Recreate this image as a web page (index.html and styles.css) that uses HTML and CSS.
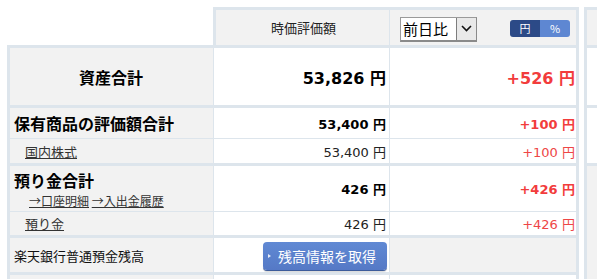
FILE: index.html
```html
<!DOCTYPE html>
<html lang="ja">
<head>
<meta charset="utf-8">
<link rel="stylesheet" href="styles.css">
</head>
<body>
<div class="page">
  <div class="main">
    <div class="head">
      <div class="head-spacer"></div>
      <div class="head-box">
        <div class="hcell hval">時価評価額</div>
        <div class="hcell hchg">
          <div class="select"><span class="select-text">前日比</span><span class="select-arrow"><svg width="11" height="7" viewBox="0 0 11 7"><polyline points="1,1 5.5,5.5 10,1" fill="none" stroke="#111" stroke-width="1.6"/></svg></span></div>
          <div class="toggle"><span class="tg tg-on">円</span><span class="tg tg-off">%</span></div>
        </div>
      </div>
    </div>
    <div class="table">
      <div class="row r-total thick">
        <div class="lab lab-center">資産合計</div>
        <div class="val big">53,826 円</div>
        <div class="chg big red">+526 円</div>
      </div>
      <div class="row r-hold thin">
        <div class="lab lab-bold">保有商品の評価額合計</div>
        <div class="val mid">53,400 円</div>
        <div class="chg mid red">+100 円</div>
      </div>
      <div class="row r-stock thick">
        <div class="lab lab-link"><a href="#">国内株式</a></div>
        <div class="val norm">53,400 円</div>
        <div class="chg norm red-l">+100 円</div>
      </div>
      <div class="row r-dep thin">
        <div class="lab lab-dep">
          <div class="dep-title">預り金合計</div>
          <div class="dep-links"><a href="#">→口座明細</a> <a href="#">→入出金履歴</a></div>
        </div>
        <div class="val mid">426 円</div>
        <div class="chg mid red">+426 円</div>
      </div>
      <div class="row r-depo thick">
        <div class="lab lab-link"><a href="#">預り金</a></div>
        <div class="val norm">426 円</div>
        <div class="chg norm red-l">+426 円</div>
      </div>
      <div class="row r-bank thick">
        <div class="lab lab-plain">楽天銀行普通預金残高</div>
        <div class="val btn-cell"><span class="fetch"><span class="tri"></span>残高情報を取得</span></div>
        <div class="chg gray"></div>
      </div>
      <div class="row r-more">
        <div class="lab"></div>
        <div class="val"></div>
        <div class="chg"></div>
      </div>
    </div>
  </div>
  <div class="side">
    <div class="side-head"></div>
    <div class="side-w1"></div>
    <div class="side-w2"></div>
    <div class="side-g"></div>
  </div>
</div>
</body>
</html>
```
FILE: styles.css
```css
* { box-sizing: border-box; }
html, body { margin: 0; padding: 0; background: #fff; }
body {
  font-family: "DejaVu Sans", "Noto Sans CJK JP", sans-serif;
  color: #000;
  width: 597px;
  height: 279px;
  overflow: hidden;
}
.page {
  display: flex;
  padding: 7px 0 0 7px;
  gap: 5px;
}
.main { width: 572px; flex: none; }

.head { display: flex; height: 38px; }
.head-spacer { width: 206px; flex: none; }
.head-box {
  flex: 1;
  display: flex;
  border: 3px solid #dde5ec;
  border-bottom: none;
  background: #f2f2f2;
}
.hcell { height: 35px; display: flex; align-items: center; }
.hval {
  width: 174px;
  flex: none;
  border-right: 1px solid #dde5ec;
  justify-content: center;
  font-family: "Noto Sans CJK JP", sans-serif;
  font-size: 13px;
  color: #222;
  padding-left: 2px;
}
.hchg { width: 186px; flex: none; padding: 0 6px 0 10px; }

.select {
  display: flex;
  width: 77px;
  height: 25px;
  margin-top: 3px;
  border: 1px solid #9a9a9a;
  border-right-color: #8a8a8a;
  border-bottom: 2px solid #8a8a8a;
  background: #fff;
}
.select-text {
  font-family: "Noto Sans CJK JP", sans-serif;
  font-size: 15px;
  line-height: 22px;
  padding-left: 2px;
  color: #000;
}
.select-arrow {
  margin-left: auto;
  width: 20px;
  border-left: 1px solid #7d7d7d;
  background: #e9e9e9;
  display: flex;
  align-items: center;
  justify-content: center;
}
.toggle {
  margin-left: auto;
  margin-top: 1px;
  display: flex;
  height: 17px;
  border-radius: 3px;
  overflow: hidden;
}
.tg {
  width: 30px;
  display: flex;
  align-items: center;
  justify-content: center;
  color: #fff;
  font-family: "Noto Sans CJK JP", sans-serif;
  font-size: 11px;
  line-height: 17px;
}
.tg-on { background: #2c4a87; }
.tg-off { background: #5e87d2; }

.table {
  border: 3px solid #dde5ec;
  border-bottom: none;
}
.row { display: flex; }
.row.thick { border-bottom: 3px solid #dde5ec; }
.row.thin { border-bottom: 1px solid #dde5ec; }
.lab {
  width: 204px;
  flex: none;
  background: #f2f2f2;
  border-right: 1px solid #dde5ec;
  display: flex;
  align-items: center;
  font-family: "Noto Sans CJK JP", sans-serif;
}
.val {
  width: 176px;
  flex: none;
  border-right: 1px solid #dde5ec;
  display: flex;
  align-items: center;
  justify-content: flex-end;
  padding-right: 3px;
  white-space: pre;
}
.chg {
  width: 186px;
  flex: none;
  display: flex;
  align-items: center;
  justify-content: flex-end;
  padding-right: 1px;
  white-space: pre;
}
.chg.gray { background: #f2f2f2; }

.r-total { height: 60px; }
.r-hold { height: 31px; }
.r-stock { height: 27px; }
.r-dep { height: 46px; }
.r-depo { height: 26px; }
.r-bank { height: 37px; }
.r-more { height: 10px; }

.lab-center { justify-content: center; font-size: 16px; font-weight: bold; padding-right: 1px; }
.lab-bold { font-size: 16px; font-weight: bold; padding-left: 4px; }
.lab-plain { font-size: 13px; padding-left: 4px; color: #111; }
.lab-link { font-size: 13px; padding-left: 15px; }
.lab a { color: #333; text-decoration: underline; }
.lab-dep {
  flex-direction: column;
  align-items: flex-start;
  justify-content: center;
  padding-left: 4px;
  padding-top: 1px;
}
.dep-title { font-size: 16px; font-weight: bold; line-height: 23px; }
.dep-links { font-size: 12px; line-height: 17px; padding-left: 15px; white-space: pre; }

.big { font-size: 16px; font-weight: bold; }
.mid { font-size: 13px; font-weight: bold; }
.norm { font-size: 13px; color: #222; }
.red { color: #f23c3c; }
.red-l { color: #ee4646; }

.btn-cell { padding-right: 2px; }
.fetch {
  display: flex;
  align-items: center;
  width: 124px;
  height: 28px;
  margin-top: 1px;
  border-radius: 4px;
  background: linear-gradient(#6089d4, #5579c6);
  box-shadow: 0 1px 0 #3d5c9a, 0 2px 1px rgba(0,0,0,0.15);
  color: #fff;
  font-family: "Noto Sans CJK JP", sans-serif;
  font-size: 14px;
  line-height: 28px;
  padding-left: 5px;
}
.tri {
  width: 0;
  height: 0;
  border-left: 3px solid rgba(255,255,255,0.85);
  border-top: 2.5px solid transparent;
  border-bottom: 2.5px solid transparent;
  margin-right: 7px;
}

.side { flex: 1; display: flex; flex-direction: column; border-left: 3px solid #dde5ec; }
.side-head { border-top: 3px solid #dde5ec; background: #f2f2f2; border-bottom: 3px solid #dde5ec; height: 41px; }
.side-w1 { height: 60px; border-bottom: 3px solid #dde5ec; background: #fff; }
.side-w2 { height: 58px; border-bottom: 3px solid #dde5ec; background: #fff; }
.side-g { flex: 1; height: 120px; background: #f2f2f2; }
```
